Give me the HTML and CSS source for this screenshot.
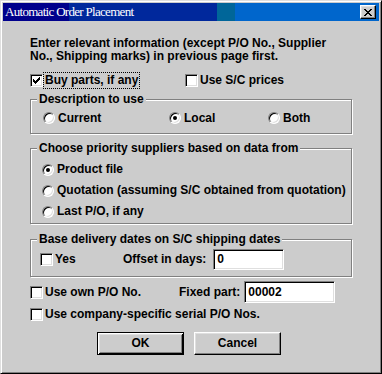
FILE: index.html
```html
<!DOCTYPE html>
<html lang="en">
<head>
    <meta charset="UTF-8">
    <meta name="viewport" content="width=device-width, initial-scale=1.0">
    <title>Automatic Order Placement</title>
    <link rel="stylesheet" href="styles.css">
</head>
<body>

    <div class="window">
        <div class="titlebar">
            <span class="title">Automatic Order Placement</span>
            <span class="close">
                <svg width="8" height="7" viewBox="0 0 8 7" shape-rendering="crispEdges"><path d="M0 0h2v1H0zM6 0h2v1H6zM1 1h2v1H1zM5 1h2v1H5zM2 2h4v1H2zM3 3h2v1H3zM2 4h4v1H2zM1 5h2v1H1zM5 5h2v1H5zM0 6h2v1H0zM6 6h2v1H6z"/></svg>
            </span>
        </div>

        <div class="content">
            <p class="intro">Enter relevant information (except P/O No., Supplier<br>No., Shipping marks) in previous page first.</p>

            <div class="row row-top">
                <label class="check col-buy">
                    <span class="box"><svg width="9" height="9" viewBox="0 0 9 9" shape-rendering="crispEdges"><path d="M1 3h1v3H1zM2 4h1v3H2zM3 5h1v3H3zM4 4h1v3H4zM5 3h1v3H5zM6 2h1v3H6zM7 1h1v3H7z"/></svg></span>
                    <span class="focus">Buy parts, if any</span>
                </label>
                <label class="check"><span class="box"></span>Use S/C prices</label>
            </div>

            <fieldset class="group group-desc">
                <legend>Description to use</legend>
                <div class="radios">
                    <label class="opt"><span class="radio"></span>Current</label>
                    <label class="opt"><span class="radio on"></span>Local</label>
                    <label class="opt"><span class="radio"></span>Both</label>
                </div>
            </fieldset>

            <fieldset class="group group-supp">
                <legend>Choose priority suppliers based on data from</legend>
                <div class="list">
                    <label class="opt"><span class="radio on"></span>Product file</label>
                    <label class="opt"><span class="radio"></span>Quotation (assuming S/C obtained from quotation)</label>
                    <label class="opt"><span class="radio"></span>Last P/O, if any</label>
                </div>
            </fieldset>

            <fieldset class="group group-dates">
                <legend>Base delivery dates on S/C shipping dates</legend>
                <div class="dates">
                    <label class="check col-yes"><span class="box"></span>Yes</label>
                    <span>Offset in days:</span>
                    <input class="field field-offset" type="text" value="0">
                </div>
            </fieldset>

            <div class="row row-own">
                <label class="check col-own"><span class="box"></span>Use own P/O No.</label>
                <span>Fixed part:</span>
                <input class="field field-fixed" type="text" value="00002">
            </div>

            <div class="row row-serial">
                <label class="check"><span class="box"></span>Use company-specific serial P/O Nos.</label>
            </div>

            <div class="buttons">
                <button class="btn default">OK</button>
                <button class="btn">Cancel</button>
            </div>
        </div>
    </div>

</body>
</html>
```

FILE: styles.css
```css
body {
    margin: 0;
    font-family: "Liberation Sans", Arial, sans-serif;
    font-size: 12px;
    font-weight: bold;
    color: #000;
}
.window {
    width: 382px;
    height: 374px;
    box-sizing: border-box;
    background: #ccc;
    border: 1px solid;
    border-color: #dfdfdf #000 #000 #dfdfdf;
    box-shadow: inset 1px 1px #fff, inset -1px -1px #808080;
    padding: 2px;
}
.titlebar {
    height: 18px;
    display: flex;
    align-items: center;
    justify-content: space-between;
    padding: 0 2px;
    background: linear-gradient(to right, #00008c 0 66px, #00289c 66px 214px, #006699 214px 232px, #0066cc 232px);
}
.title {
    font-family: "Liberation Serif", "Times New Roman", serif;
    font-weight: normal;
    font-size: 13px;
    letter-spacing: -0.7px;
    color: #fff;
}
.close {
    width: 16px;
    height: 14px;
    margin-right: 1px;
    box-sizing: border-box;
    display: flex;
    align-items: center;
    justify-content: center;
    padding-right: 1px;
    background: #ccc;
    border: 1px solid;
    border-color: #fff #000 #000 #fff;
    box-shadow: inset -1px -1px #808080, inset 1px 1px #dfdfdf;
}
.content {
    padding: 0 27px;
}
.intro {
    margin: 16px 0 0;
    line-height: 13px;
}
.row {
    display: flex;
    align-items: center;
}
.row-top {
    margin-top: 8px;
    height: 18px;
}
.check,
.opt {
    display: flex;
    align-items: center;
    line-height: 13px;
}
.box {
    width: 13px;
    height: 13px;
    box-sizing: border-box;
    padding: 1px;
    margin-right: 2px;
    background: #fff;
    border: 1px solid;
    border-color: #808080 #fff #fff #808080;
    box-shadow: inset 1px 1px #000, inset -1px -1px #dfdfdf;
    flex-shrink: 0;
}
.box svg {
    display: block;
}
.focus {
    margin-left: -2px;
    padding: 1px;
    border: 1px dotted #000;
}
.col-buy {
    width: 155px;
}
.radio {
    position: relative;
    width: 12px;
    height: 12px;
    box-sizing: border-box;
    margin-right: 3px;
    border-radius: 50%;
    background: #fff;
    border: 1px solid;
    border-color: #808080 #fff #fff #808080;
    box-shadow: inset 1px 1px #000, inset -1px -1px #dfdfdf;
    flex-shrink: 0;
}
.radio.on::after {
    content: "";
    position: absolute;
    left: 3px;
    top: 3px;
    width: 4px;
    height: 4px;
    border-radius: 50%;
    background: #000;
}
.group {
    margin: 0;
    padding: 0;
    min-width: 0;
    border: 1px solid #808080;
    box-shadow: inset 1px 1px #fff, 1px 1px #fff;
}
.group legend {
    margin-left: 6px;
    padding: 0 2px;
    line-height: 13px;
    background: #ccc;
}
.group-desc {
    margin-top: 4px;
}
.radios {
    display: grid;
    grid-template-columns: 126px 99px auto;
    align-items: center;
    height: 22px;
    padding: 1px 0 4px 12px;
}
.group-supp {
    margin-top: 8px;
}
.list {
    display: grid;
    grid-auto-rows: 21px;
    align-items: center;
    padding: 4px 0 1px 11px;
}
.group-dates {
    margin-top: 9px;
}
.dates {
    display: flex;
    align-items: center;
    height: 22px;
    padding: 2px 0 6px 9px;
}
.col-yes {
    width: 83px;
}
.field {
    box-sizing: border-box;
    padding: 0 3px;
    margin: 0 0 0 7px;
    font: inherit;
    color: #000;
    background: #fff;
    border: 1px solid;
    border-color: #808080 #fff #fff #808080;
    box-shadow: inset 1px 1px #000, inset -1px -1px #dfdfdf;
    outline: none;
}
.field-offset {
    width: 71px;
    height: 21px;
}
.row-own {
    margin-top: 4px;
    height: 22px;
}
.col-own {
    width: 149px;
}
.field-fixed {
    width: 91px;
    height: 22px;
    margin-left: 4px;
}
.row-serial {
    margin-top: 1px;
    height: 20px;
}
.buttons {
    display: flex;
    gap: 10px;
    margin-top: 8px;
    padding-left: 67px;
}
.btn {
    width: 87px;
    height: 23px;
    padding: 0 0 1px;
    font: inherit;
    color: #000;
    background: #ccc;
    border: 1px solid;
    border-color: #fff #000 #000 #fff;
    box-shadow: inset -1px -1px #808080, inset 1px 1px #dfdfdf;
}
.btn.default {
    border-color: #000;
    box-shadow: inset 1px 1px #fff, inset -1px -1px #000, inset 2px 2px #dfdfdf, inset -2px -2px #808080;
}
```
